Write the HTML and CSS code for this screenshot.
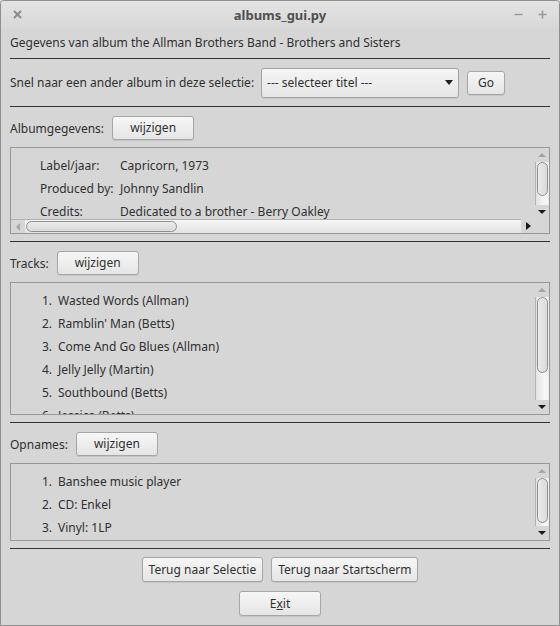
FILE: index.html
```html
<!DOCTYPE html>
<html>
<head>
<meta charset="utf-8">
<title>albums_gui.py</title>
<link rel="stylesheet" href="styles.css">
</head>
<body>
<div class="window">
  <div class="titlebar">
    <div class="tb-left">
      <svg class="tb-icon" width="9" height="9" viewBox="0 0 9 9"><path d="M1 1 L8 8 M8 1 L1 8" stroke="#8c8c8c" stroke-width="2" fill="none"/></svg>
    </div>
    <div class="tb-title">albums_gui.py</div>
    <div class="tb-right">
      <svg class="tb-icon" width="9" height="9" viewBox="0 0 9 9"><path d="M0.5 4.5 L8.5 4.5" stroke="#9a9a9a" stroke-width="1.6" fill="none"/></svg>
      <svg class="tb-icon" width="9" height="9" viewBox="0 0 9 9"><path d="M0.5 4.5 L8.5 4.5 M4.5 0.5 L4.5 8.5" stroke="#9a9a9a" stroke-width="1.6" fill="none"/></svg>
    </div>
  </div>

  <div class="content">
    <div class="heading">Gegevens van album the Allman Brothers Band - Brothers and Sisters</div>
    <div class="sep"></div>

    <div class="select-row">
      <span>Snel naar een ander album in deze selectie:</span>
      <div class="combo"><span>--- selecteer titel ---</span><span class="combo-arrow"></span></div>
      <button class="btn btn-go">Go</button>
    </div>
    <div class="sep"></div>

    <div class="section-head">
      <span>Albumgegevens:</span>
      <button class="btn btn-edit">wijzigen</button>
    </div>
    <div class="box box-album">
      <div class="box-view">
        <div class="details">
          <span>Label/jaar:</span><span>Capricorn, 1973</span>
          <span>Produced by:</span><span>Johnny Sandlin</span>
          <span>Credits:</span><span>Dedicated to a brother - Berry Oakley</span>
        </div>
      </div>
      <div class="vscroll">
        <div class="arrow-cell"><span class="arr arr-up"></span></div>
        <div class="vtrack"><div class="vthumb thumb-album"></div></div>
        <div class="arrow-cell"><span class="arr arr-down"></span></div>
      </div>
      <div class="hscroll">
        <div class="arrow-cell"><span class="arr arr-left"></span></div>
        <div class="htrack"><div class="hthumb"></div></div>
        <div class="arrow-cell"><span class="arr arr-right"></span></div>
      </div>
      <div class="corner"></div>
    </div>
    <div class="sep sep-after-box"></div>

    <div class="section-head">
      <span>Tracks:</span>
      <button class="btn btn-edit">wijzigen</button>
    </div>
    <div class="box box-tracks">
      <div class="box-view">
        <div class="list">
          <span class="num">1.</span><span>Wasted Words (Allman)</span>
          <span class="num">2.</span><span>Ramblin' Man (Betts)</span>
          <span class="num">3.</span><span>Come And Go Blues (Allman)</span>
          <span class="num">4.</span><span>Jelly Jelly (Martin)</span>
          <span class="num">5.</span><span>Southbound (Betts)</span>
          <span class="num">6.</span><span>Jessica (Betts)</span>
        </div>
      </div>
      <div class="vscroll">
        <div class="arrow-cell"><span class="arr arr-up"></span></div>
        <div class="vtrack"><div class="vthumb thumb-tracks"></div></div>
        <div class="arrow-cell"><span class="arr arr-down"></span></div>
      </div>
    </div>
    <div class="sep sep-after-box"></div>

    <div class="section-head">
      <span>Opnames:</span>
      <button class="btn btn-edit">wijzigen</button>
    </div>
    <div class="box box-rec">
      <div class="box-view">
        <div class="list">
          <span class="num">1.</span><span>Banshee music player</span>
          <span class="num">2.</span><span>CD: Enkel</span>
          <span class="num">3.</span><span>Vinyl: 1LP</span>
        </div>
      </div>
      <div class="vscroll">
        <div class="arrow-cell"><span class="arr arr-up"></span></div>
        <div class="vtrack"><div class="vthumb thumb-rec"></div></div>
        <div class="arrow-cell"><span class="arr arr-down"></span></div>
      </div>
    </div>
    <div class="sep sep-after-box"></div>

    <div class="bottom">
      <div class="bottom-row">
        <button class="btn btn-bottom">Terug naar Selectie</button>
        <button class="btn btn-bottom">Terug naar Startscherm</button>
      </div>
      <button class="btn btn-bottom btn-exit">E<span class="mn">x</span>it</button>
    </div>
  </div>
</div>
</body>
</html>
```

FILE: styles.css
```css
* { box-sizing: border-box; }
html, body { margin: 0; padding: 0; }
body {
  width: 560px;
  height: 626px;
  background: #d6d6d6;
  font-family: "Noto Sans", "Open Sans", sans-serif;
  font-size: 12px;
  color: #303030;
  overflow: hidden;
}
.window {
  width: 560px;
  height: 626px;
  border: 1px solid #8f8f8f;
  border-radius: 4px 4px 0 0;
  background: #d6d6d6;
  display: flex;
  flex-direction: column;
  overflow: hidden;
}
.titlebar {
  height: 27px;
  flex: none;
  display: grid;
  grid-template-columns: 1fr auto 1fr;
  align-items: center;
  padding: 0 12px 0 12px;
  background: linear-gradient(#e3e3e3, #d8d8d8);
}
.tb-icon { display: block; }
.tb-left { display: flex; }
.tb-title {
  font-weight: bold;
  font-size: 13px;
  color: #4f4f4f;
}
.tb-right {
  justify-self: end;
  display: flex;
  gap: 15px;
}
.content {
  padding: 0 9px;
  display: flex;
  flex-direction: column;
  flex: 1;
}
.heading {
  height: 30px;
  line-height: 30px;
  white-space: nowrap;
}
.sep {
  height: 1px;
  flex: none;
  background: #333333;
}
.sep-after-box { margin-top: 7px; }

.select-row {
  height: 47px;
  display: flex;
  align-items: center;
  gap: 8px;
  white-space: nowrap;
}
.combo {
  width: 198px;
  height: 30px;
  margin-left: -1px;
  border: 1px solid #a3a3a3;
  border-radius: 3px;
  background: linear-gradient(#f5f5f5, #e6e6e6);
  box-shadow: 0 1px 0 rgba(0,0,0,0.07);
  display: flex;
  align-items: center;
  justify-content: space-between;
  padding: 0 4px 0 5px;
}
.combo-arrow {
  width: 0;
  height: 0;
  border-left: 4px solid transparent;
  border-right: 4px solid transparent;
  border-top: 5px solid #1e1e1e;
  margin-right: 1px;
}

.btn {
  font-family: inherit;
  font-size: 12px;
  color: #303030;
  height: 24px;
  border: 1px solid #a6a6a6;
  border-radius: 3px;
  background: linear-gradient(#f6f6f6, #e5e5e5);
  box-shadow: 0 1px 0 rgba(0,0,0,0.08);
  padding: 0 8px;
  margin: 0;
  line-height: 1;
  white-space: nowrap;
}
.btn-go { width: 38px; padding: 0; }
.btn-edit { width: 82px; padding: 0; }
.btn-bottom { height: 25px; min-width: 82px; padding: 0 6px; }
.mn { text-decoration: underline; }

.section-head {
  display: flex;
  align-items: center;
  gap: 8px;
  padding-top: 9px;
  margin-bottom: 7px;
}

.box {
  border: 1px solid #979797;
  flex: none;
  display: grid;
  grid-template-columns: 1fr 14px;
}
.box-album {
  height: 87px;
  grid-template-rows: 1fr 14px;
}
.box-tracks { height: 133px; }
.box-rec { height: 78px; }

.box-view {
  overflow: hidden;
  min-height: 0;
}
.details {
  display: grid;
  grid-template-columns: 80px auto;
  line-height: 23px;
  padding: 6px 0 0 29px;
  white-space: nowrap;
}
.list {
  display: grid;
  grid-template-columns: 16px auto;
  column-gap: 6px;
  line-height: 23px;
  padding: 6px 0 0 25px;
  white-space: nowrap;
}
.num { text-align: right; }

.vscroll {
  display: flex;
  flex-direction: column;
  min-height: 0;
}
.arrow-cell {
  flex: none;
  width: 14px;
  height: 14px;
  display: flex;
  align-items: center;
  justify-content: center;
}
.vtrack {
  flex: 1;
  border-left: 1px solid #b2b2b2;
  background: linear-gradient(to right, #e2e2e2, #f7f7f7 65%, #f0f0f0);
  padding: 0 1px 0 1px;
}
.vthumb {
  width: 11px;
  border: 1px solid #8e8e8e;
  border-radius: 6px;
  background: linear-gradient(to right, #ebebeb, #dadada);
}
.thumb-album { height: 34px; }
.thumb-tracks { height: 76px; }
.thumb-rec { height: 45px; }

.hscroll {
  display: flex;
}
.htrack {
  flex: 1;
  border-top: 1px solid #b2b2b2;
  background: linear-gradient(#f6f6f6, #e3e3e3);
  padding: 1px 0 0 1px;
}
.hthumb {
  width: 151px;
  height: 11px;
  border: 1px solid #8e8e8e;
  border-radius: 6px;
  background: linear-gradient(#ebebeb, #dadada);
}
.hscroll > .arrow-cell:first-child { border-top: 1px solid #b2b2b2; }

.arr { width: 0; height: 0; display: block; }
.arr-up {
  border-left: 4px solid transparent;
  border-right: 4px solid transparent;
  border-bottom: 4px solid #a4a4a4;
}
.arr-down {
  border-left: 4px solid transparent;
  border-right: 4px solid transparent;
  border-top: 4px solid #1a1a1a;
}
.arr-left {
  border-top: 4px solid transparent;
  border-bottom: 4px solid transparent;
  border-right: 4px solid #a4a4a4;
}
.arr-right {
  border-top: 4px solid transparent;
  border-bottom: 4px solid transparent;
  border-left: 5px solid #1a1a1a;
}

.bottom {
  padding-top: 8px;
  display: flex;
  flex-direction: column;
  align-items: center;
  gap: 9px;
}
.bottom-row {
  display: flex;
  gap: 8px;
}
```
